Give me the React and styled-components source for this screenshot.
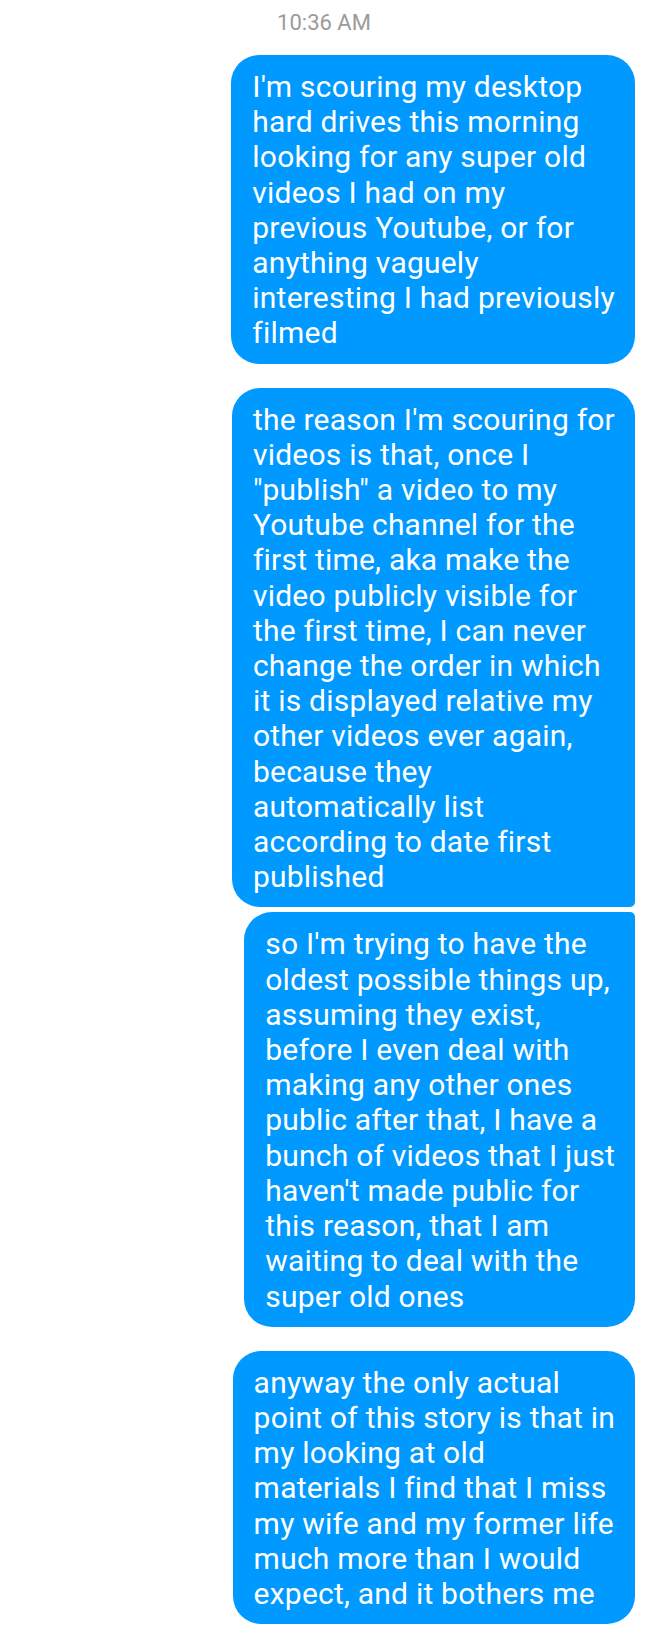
import React from "react";
import styled, { createGlobalStyle } from "styled-components";

const GlobalStyle = createGlobalStyle`
  html, body {
    margin: 0;
    padding: 0;
    background: #ffffff;
  }
  body {
    font-family: Roboto, "Noto Sans", "Liberation Sans", sans-serif;
  }
`;

const Thread = styled.div`
  width: 648px;
  min-height: 1646px;
  box-sizing: border-box;
  display: flex;
  flex-direction: column;
  align-items: flex-end;
  padding: 10px 13px 20px 0;
  background: #ffffff;
`;

const Timestamp = styled.div`
  align-self: center;
  margin-left: 13px;
  font-size: 22px;
  line-height: 26px;
  color: #9b9b9b;
  margin-bottom: 19px;
`;

const Group = styled.div`
  display: flex;
  flex-direction: column;
  align-items: flex-end;
  gap: 5px;
  & + & {
    margin-top: 24px;
  }
`;

const Bubble = styled.div`
  width: fit-content;
  box-sizing: border-box;
  background: #0099ff;
  color: #ffffff;
  font-size: 30px;
  line-height: 35.2px;
  letter-spacing: 0.22px;
  white-space: pre-line;
  padding: 14px 20px 13px 21px;
  border-radius: ${({ $first, $last }) =>
    `28px ${$first ? "28px" : "5px"} ${$last ? "28px" : "5px"} 28px`};
`;

const groups = [
  [
    "I'm scouring my desktop\nhard drives this morning\nlooking for any super old\nvideos I had on my\nprevious Youtube, or for\nanything vaguely\ninteresting I had previously\nfilmed",
  ],
  [
    "the reason I'm scouring for\nvideos is that, once I\n\"publish\" a video to my\nYoutube channel for the\nfirst time, aka make the\nvideo publicly visible for\nthe first time, I can never\nchange the order in which\nit is displayed relative my\nother videos ever again,\nbecause they\nautomatically list\naccording to date first\npublished",
    "so I'm trying to have the\noldest possible things up,\nassuming they exist,\nbefore I even deal with\nmaking any other ones\npublic after that, I have a\nbunch of videos that I just\nhaven't made public for\nthis reason, that I am\nwaiting to deal with the\nsuper old ones",
  ],
  [
    "anyway the only actual\npoint of this story is that in\nmy looking at old\nmaterials I find that I miss\nmy wife and my former life\nmuch more than I would\nexpect, and it bothers me",
  ],
];

export default function App() {
  return (
    <>
      <GlobalStyle />
      <Thread>
        <Timestamp>10:36 AM</Timestamp>
        {groups.map((msgs, gi) => (
          <Group key={gi}>
            {msgs.map((text, i) => (
              <Bubble key={i} $first={i === 0} $last={i === msgs.length - 1}>
                {text}
              </Bubble>
            ))}
          </Group>
        ))}
      </Thread>
    </>
  );
}
